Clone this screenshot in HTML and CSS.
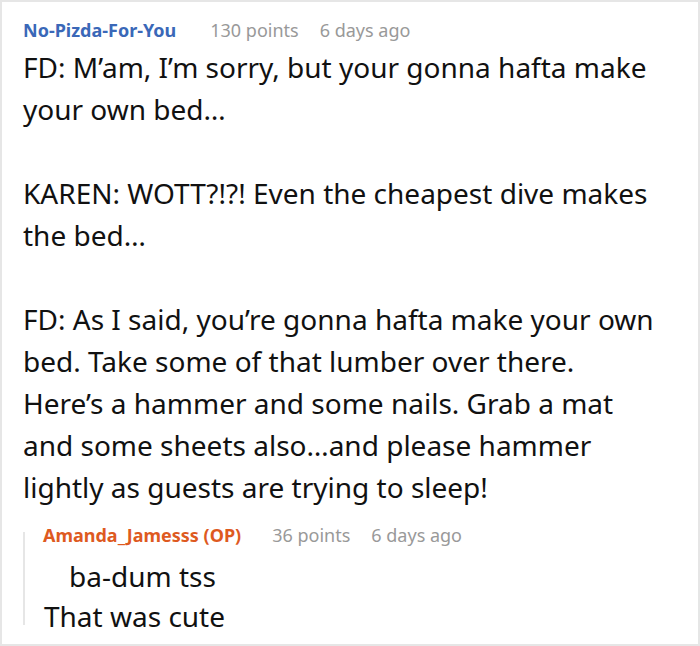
FILE: index.html
```html
<!DOCTYPE html>
<html>
<head>
<meta charset="utf-8">
<link rel="stylesheet" href="styles.css">
</head>
<body>
<div class="frame">
  <div class="comment">
    <div class="meta">
      <span class="author">No-Pizda-For-You</span>
      <span class="info">130 points</span>
      <span class="info">6 days ago</span>
    </div>
    <div class="text">
      <p>FD: M’am, I’m sorry, but your gonna hafta make your own bed…</p>
      <p>KAREN: WOTT?!?! Even the cheapest dive makes the bed…</p>
      <p>FD: As I said, you’re gonna hafta make your own bed. Take some of that lumber over there. Here’s a hammer and some nails. Grab a mat and some sheets also…and please hammer lightly as guests are trying to sleep!</p>
    </div>
    <div class="reply">
      <div class="meta reply-meta">
        <span class="author op">Amanda_Jamesss (OP)</span>
        <span class="info">36 points</span>
        <span class="info">6 days ago</span>
      </div>
      <div class="text reply-text">
        <p><span class="indent">ba-dum tss</span><br>That was cute</p>
      </div>
    </div>
  </div>
</div>
</body>
</html>
```
FILE: styles.css
```css
* { box-sizing: border-box; }
html, body { margin: 0; padding: 0; background: #fff; }
body { font-family: "Noto Sans", "Open Sans", sans-serif; color: #111; }
.frame {
  width: 700px;
  height: 646px;
  border: 2px solid #e6e6e6;
  padding: 16px 42px 0 21px;
  overflow: hidden;
}
.meta {
  display: flex;
  align-items: baseline;
  gap: 21px;
  font-size: 18px;
  line-height: 24px;
}
.author { font-weight: 700; color: #3a68b8; margin-right: 10px; }
.comment > .meta .author { margin-right: 13px; }
.author.op { color: #de5a1f; }
.info { color: #999; }
.text { font-size: 28px; line-height: 42px; margin-top: 4px; }
.text p { margin: 0 0 42px 0; }
.text p:last-child { margin-bottom: 0; }
.reply {
  display: flex;
  flex-direction: column;
  margin-top: 24px;
  border-left: 2px solid #e6e6e6;
  padding-left: 19px;
}
.reply-meta { margin-top: -9px; margin-left: -1px; }
.reply-text { line-height: 40px; margin-top: 9px; margin-bottom: -11px; }
.indent { padding-left: 25px; }
```
